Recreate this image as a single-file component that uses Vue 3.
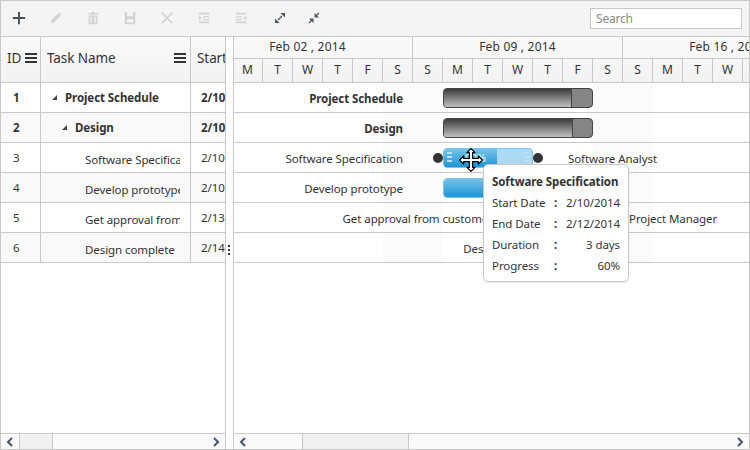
<script setup>
const leftOf = (x) => x - 234

const tools = [
  { name: 'add', on: true },
  { name: 'edit' },
  { name: 'delete' },
  { name: 'save' },
  { name: 'cancel' },
  { name: 'indent' },
  { name: 'outdent' }
]

const weeks = [
  { label: 'Feb 02 , 2014' },
  { label: 'Feb 09 , 2014' },
  { label: 'Feb 16 , 2014' }
]
const days = ['S', 'M', 'T', 'W', 'T', 'F', 'S']

const rows = [
  { id: 1, name: 'Project Schedule', start: '2/10', level: 0, parent: true, summary: true, x: 443, w: 150, done: 128 },
  { id: 2, name: 'Design', start: '2/10', level: 1, parent: true, summary: true, x: 443, w: 150, done: 129 },
  { id: 3, name: 'Software Specification', start: '2/10', level: 2, x: 443, w: 90, done: 54, right: 'Software Analyst', rightX: 568, active: true },
  { id: 4, name: 'Develop prototype', start: '2/10', level: 2, x: 443, w: 90, done: 90 },
  { id: 5, name: 'Get approval from customer', start: '2/13', level: 2, x: 533, w: 60, done: 60, right: 'Project Manager', rightX: 629 },
  { id: 6, name: 'Design complete', start: '2/14', level: 2, x: 593, w: 0, done: 0 }
]

const tipRows = [
  ['Start Date', '2/10/2014'],
  ['End Date', '2/12/2014'],
  ['Duration', '3 days'],
  ['Progress', '60%']
]
</script>

<template>
  <div class="gantt">
    <div class="toolbar">
      <button v-for="t in tools" :key="t.name" class="tool" :class="{ on: t.on }">
        <svg width="14" height="14" viewBox="0 0 16 16">
          <path v-if="t.name === 'add'" d="M8 1v14M1 8h14" fill="none" stroke="currentColor" stroke-width="2.200" />
          <path v-else-if="t.name === 'edit'" d="M2 14l.8-3.400L10.600 2.800l2.600 2.600-7.800 7.800zM11.400 2l.9-.8 2.500 2.500-.8.900z" fill="currentColor" />
          <path v-else-if="t.name === 'delete'" d="M6 1h4v1.500h4V4H2V2.500h4zM3 5h10v10H3zM5 6.500v7h1.500v-7zM9.500 6.500v7H11v-7z" fill="currentColor" fill-rule="evenodd" />
          <path v-else-if="t.name === 'save'" d="M2 1h12v14H2zM4.500 1v5h7V1zM4.500 9.500V13h7V9.500z" fill="currentColor" fill-rule="evenodd" />
          <path v-else-if="t.name === 'cancel'" d="M2 2l12 12M14 2L2 14" fill="none" stroke="currentColor" stroke-width="2" />
          <path v-else-if="t.name === 'indent'" d="M2 2h12v2H2zM7 6h7v1.500H7zM7 9h7v1.500H7zM2 12h12v2H2zM2 5.500L5.500 8 2 10.500z" fill="currentColor" />
          <path v-else d="M2 2h12v2H2zM2 6h7v1.500H2zM2 9h7v1.500H2zM2 12h12v2H2zM14 5.500L10.500 8 14 10.500z" fill="currentColor" />
        </svg>
      </button>
      <button class="tool wide expand">
        <svg width="12" height="12" viewBox="0 0 12 12">
          <path d="M6.500 1H11v4.500zM1 6.500L5.500 11H1z" fill="#4d5660" />
          <path d="M4 8l4-4" stroke="#4d5660" stroke-width="1.300" />
        </svg>
      </button>
      <button class="tool wide">
        <svg width="12" height="12" viewBox="0 0 12 12">
          <path d="M6.500 1v4.500H11zM5.500 11V6.500H1z" fill="#4d5660" />
          <path d="M11 1L8 4M1 11l3-3" stroke="#4d5660" stroke-width="1.300" />
        </svg>
      </button>
      <input class="search" placeholder="Search" />
    </div>

    <div class="body">
      <section class="grid-pane">
        <div class="grid-row grid-head">
          <div class="cell head-cell">ID<span class="menu"></span></div>
          <div class="cell head-cell task-head">Task Name<span class="menu"></span></div>
          <div class="cell head-cell">Start</div>
        </div>
        <div class="grid-rows">
          <div v-for="r in rows" :key="r.id" class="grid-row data-row" :class="{ even: r.id % 2 === 0, strong: r.parent }">
            <div class="cell id-cell">{{ r.id }}</div>
            <div class="cell name-cell" :class="'level-' + r.level">
              <i v-if="r.parent" class="twisty"></i>
              <span class="name-text">{{ r.name }}</span>
            </div>
            <div class="cell date-cell">{{ r.start }}</div>
          </div>
        </div>
        <div class="scrollbar">
          <span class="arrow">
            <svg width="8" height="10" viewBox="0 0 8 10"><path d="M6 1L2 5l4 4" fill="none" stroke="#45566a" stroke-width="2" /></svg>
          </span>
          <span class="thumb small"></span>
          <span class="track"></span>
          <span class="arrow end">
            <svg width="8" height="10" viewBox="0 0 8 10"><path d="M2 1l4 4-4 4" fill="none" stroke="#45566a" stroke-width="2" /></svg>
          </span>
        </div>
      </section>

      <div class="splitter">
        <div class="grip"><i></i><i></i><i></i></div>
      </div>

      <section class="chart-pane">
        <div class="timeline">
          <div v-for="w in weeks" :key="w.label" class="week">
            <div class="week-label">{{ w.label }}</div>
            <div class="week-days">
              <span v-for="(d, i) in days" :key="i" class="day">{{ d }}</span>
            </div>
          </div>
        </div>
        <div class="chart-rows">
          <div v-for="r in rows" :key="r.id" class="chart-row">
            <span class="bar-label left" :class="{ strong: r.parent }" :style="{ right: 750 - r.x + 39 + 'px' }">{{ r.name }}</span>
            <div v-if="r.w" class="bar" :class="{ summary: r.summary }" :style="{ left: leftOf(r.x) + 'px', width: r.w + 'px' }">
              <div class="bar-done" :style="{ width: r.done + 'px' }">
                <span v-if="r.active" class="bar-pct">60%</span>
              </div>
              <template v-if="r.active">
                <i class="bar-grip start"></i>
                <i class="bar-grip end"></i>
              </template>
            </div>
            <template v-if="r.active">
              <i class="link-dot" :style="{ left: leftOf(r.x) - 10 + 'px' }"></i>
              <i class="link-dot" :style="{ left: leftOf(r.x + r.w) + 'px' }"></i>
            </template>
            <span v-if="r.right" class="bar-label" :style="{ left: leftOf(r.rightX) + 'px' }">{{ r.right }}</span>
          </div>
        </div>
        <div class="scrollbar chart-scroll">
          <span class="arrow">
            <svg width="8" height="10" viewBox="0 0 8 10"><path d="M6 1L2 5l4 4" fill="none" stroke="#45566a" stroke-width="2" /></svg>
          </span>
          <span class="track lead"></span>
          <span class="thumb big"></span>
          <span class="track"></span>
          <span class="arrow end">
            <svg width="8" height="10" viewBox="0 0 8 10"><path d="M2 1l4 4-4 4" fill="none" stroke="#45566a" stroke-width="2" /></svg>
          </span>
        </div>
      </section>
    </div>

    <div class="tooltip">
      <div class="tip-title">Software Specification</div>
      <div v-for="t in tipRows" :key="t[0]" class="tip-row">
        <span>{{ t[0] }}</span>
        <b>:</b>
        <span class="tip-val">{{ t[1] }}</span>
      </div>
    </div>

    <svg class="move-cursor" width="26" height="26" viewBox="0 0 32 32">
      <path d="M16 2l5 5h-3v7h7v-3l5 5-5 5v-3h-7v7h3l-5 5-5-5h3v-7H7v3l-5-5 5-5v3h7V7h-3z" fill="#fff" stroke="#000" stroke-width="1.500" stroke-linejoin="round" />
    </svg>
  </div>
</template>

<style>
html, body {
  margin: 0;
  background: #fff;
}
</style>

<style scoped>
.gantt {
  position: relative;
  width: 750px;
  height: 450px;
  box-sizing: border-box;
  border: 1px solid #c8c8c8;
  display: flex;
  flex-direction: column;
  overflow: hidden;
  font-family: "Noto Sans", "Open Sans", sans-serif;
  font-size: 11.5px;
  letter-spacing: -0.08px;
  color: #333;
  background: #fff;
}

.toolbar {
  height: 35px;
  flex: none;
  display: flex;
  align-items: center;
  background: #f4f4f4;
  border-bottom: 1px solid #c8c8c8;
  padding-right: 7px;
}

.tool {
  width: 37px;
  height: 35px;
  box-sizing: border-box;
  padding: 0 0 2px;
  border: 0;
  background: none;
  color: #d2d2d2;
  display: flex;
  align-items: center;
  justify-content: center;
}

.tool:first-child {
  margin-left: -1px;
}

.tool.on {
  color: #4a5058;
}

.tool.wide {
  width: 34px;
}

.expand {
  margin-left: 4px;
}

.search {
  margin-left: auto;
  width: 152px;
  height: 21px;
  box-sizing: border-box;
  border: 1px solid #c8c8c8;
  background: #fff;
  padding: 0 5px;
  font: 12px "Noto Sans", sans-serif;
  letter-spacing: -0.2px;
  color: #333;
  outline: none;
}

.search::placeholder {
  color: #8a8a8a;
  opacity: 1;
}

.body {
  flex: 1;
  min-height: 0;
  display: flex;
}

.grid-pane {
  width: 225px;
  box-sizing: border-box;
  flex: none;
  display: flex;
  flex-direction: column;
  border-right: 1px solid #c8c8c8;
}

.grid-row {
  display: grid;
  grid-template-columns: 40px 150px 1fr;
  flex: none;
  border-bottom: 1px solid #c8c8c8;
}

.grid-head {
  height: 45px;
  background: linear-gradient(#fafafa, #f2f2f2);
  font-size: 13.5px;
}

.cell {
  border-right: 1px solid #c8c8c8;
  display: flex;
  align-items: center;
  overflow: hidden;
  white-space: nowrap;
  min-width: 0;
}

.cell:last-child {
  border-right: 0;
}

.head-cell {
  padding: 0 0 4px 6px;
  color: #333;
}

.menu {
  width: 12px;
  height: 10px;
  margin-left: 4px;
  flex: none;
  border-top: 2px solid #333;
  border-bottom: 2px solid #333;
  box-sizing: border-box;
  background: linear-gradient(#333, #333) center / 100% 2px no-repeat;
}

.task-head {
  justify-content: space-between;
  padding-right: 4px;
}

.grid-rows {
  flex: 1;
  min-height: 0;
}

.data-row {
  height: 29px;
}

.data-row.even {
  background: #f9f9f9;
}

.data-row.strong {
  font-weight: 700;
}

.id-cell {
  padding-left: 12px;
}

.name-cell {
  padding-right: 10px;
}

.level-0 {
  padding-left: 11px;
}

.level-1 {
  padding-left: 21px;
}

.level-2 {
  padding-left: 44px;
  padding-top: 4px;
}

.name-text {
  overflow: hidden;
}

.twisty {
  width: 0;
  height: 0;
  margin-right: 8px;
  border-left: 5px solid transparent;
  border-bottom: 5px solid #444;
}

.date-cell {
  padding-left: 10px;
}

.scrollbar {
  height: 15px;
  flex: none;
  display: flex;
  border-top: 1px solid #c8c8c8;
  background: #fafafa;
}

.arrow {
  width: 18px;
  flex: none;
  display: flex;
  align-items: center;
  justify-content: center;
}

.arrow.end {
  margin-left: auto;
}

.thumb {
  flex: none;
  box-sizing: border-box;
  border-left: 1px solid #c8c8c8;
  border-right: 1px solid #c8c8c8;
  background: #f1f1f1;
}

.thumb.small {
  width: 34px;
}

.thumb.big {
  width: 107px;
}

.track {
  flex: 1;
}

.track.lead {
  flex: none;
  width: 50px;
}

.splitter {
  width: 7px;
  flex: none;
  position: relative;
  background: #fff;
}

.grip {
  position: absolute;
  left: 2px;
  top: 208px;
  display: flex;
  flex-direction: column;
  gap: 2px;
}

.grip i {
  width: 2px;
  height: 2px;
  background: #333;
}

.chart-pane {
  flex: 1;
  min-width: 0;
  display: flex;
  flex-direction: column;
  border-left: 1px solid #c8c8c8;
  overflow: hidden;
}

.timeline {
  display: flex;
  flex: none;
  height: 46px;
  box-sizing: border-box;
  margin-left: -31px;
  border-bottom: 1px solid #c8c8c8;
  background: linear-gradient(#fafafa, #f2f2f2);
  font-size: 12px;
}

.week {
  flex: none;
  width: 210px;
}

.week-label {
  height: 22px;
  box-sizing: border-box;
  border-right: 1px solid #c8c8c8;
  border-bottom: 1px solid #c8c8c8;
  text-align: center;
  line-height: 20px;
  letter-spacing: 0.2px;
}

.week-days {
  display: flex;
  height: 23px;
}

.day {
  width: 30px;
  box-sizing: border-box;
  border-right: 1px solid #c8c8c8;
  text-align: center;
  line-height: 22px;
}

.chart-rows {
  flex: 1;
  min-height: 0;
  background:
    linear-gradient(#fbfbfb, #fbfbfb) 149px 0 / 60px 180px no-repeat,
    linear-gradient(#fbfbfb, #fbfbfb) 359px 0 / 60px 180px no-repeat;
}

.chart-row {
  position: relative;
  height: 30px;
  box-sizing: border-box;
  border-bottom: 1px solid #c8c8c8;
}

.bar-label {
  position: absolute;
  top: 7px;
  line-height: 18px;
  white-space: nowrap;
}

.bar-label.left {
  text-align: right;
}

.bar-label.strong {
  font-weight: 700;
}

.bar {
  position: absolute;
  top: 5px;
  height: 20px;
  box-sizing: border-box;
  border-radius: 4px;
  overflow: hidden;
  background: #abdaf2;
  border: 1px solid #7cc5ea;
}

.bar-done {
  height: 100%;
  margin: -1px 0 0 -1px;
  padding-bottom: 2px;
  background: linear-gradient(#7cc5ea, #1593d4);
  display: flex;
  align-items: center;
  justify-content: flex-end;
}

.bar-pct {
  color: #fff;
  font-size: 11px;
  padding-right: 11px;
}

.bar.summary {
  background: #858585;
  border-color: #444;
}

.bar.summary .bar-done {
  margin: 0;
  padding: 0;
  box-sizing: border-box;
  background: linear-gradient(#3c3c3c, #c0c0c0);
  border-right: 1px solid #444;
}

.bar-grip {
  position: absolute;
  top: 3px;
  width: 5px;
  height: 12px;
  background: repeating-linear-gradient(#b9e0f4 0 2px, transparent 2px 4px);
}

.bar-grip.start {
  left: 3px;
}

.bar-grip.end {
  right: 3px;
}

.link-dot {
  position: absolute;
  top: 10px;
  width: 10px;
  height: 10px;
  border-radius: 50%;
  background: #333;
}

.tooltip {
  position: absolute;
  left: 482px;
  top: 163px;
  width: 146px;
  height: 118px;
  box-sizing: border-box;
  padding: 7px 8px;
  background: #fff;
  border: 1px solid #c8c8c8;
  border-radius: 5px;
  box-shadow: 0 1px 2px rgba(0, 0, 0, 0.08);
}

.tip-title {
  font-weight: 700;
  line-height: 20px;
  white-space: nowrap;
}

.tip-row {
  display: grid;
  grid-template-columns: 62px 8px 1fr;
  line-height: 21px;
  white-space: nowrap;
}

.tip-val {
  text-align: right;
}

.move-cursor {
  position: absolute;
  left: 457px;
  top: 146px;
}
</style>
